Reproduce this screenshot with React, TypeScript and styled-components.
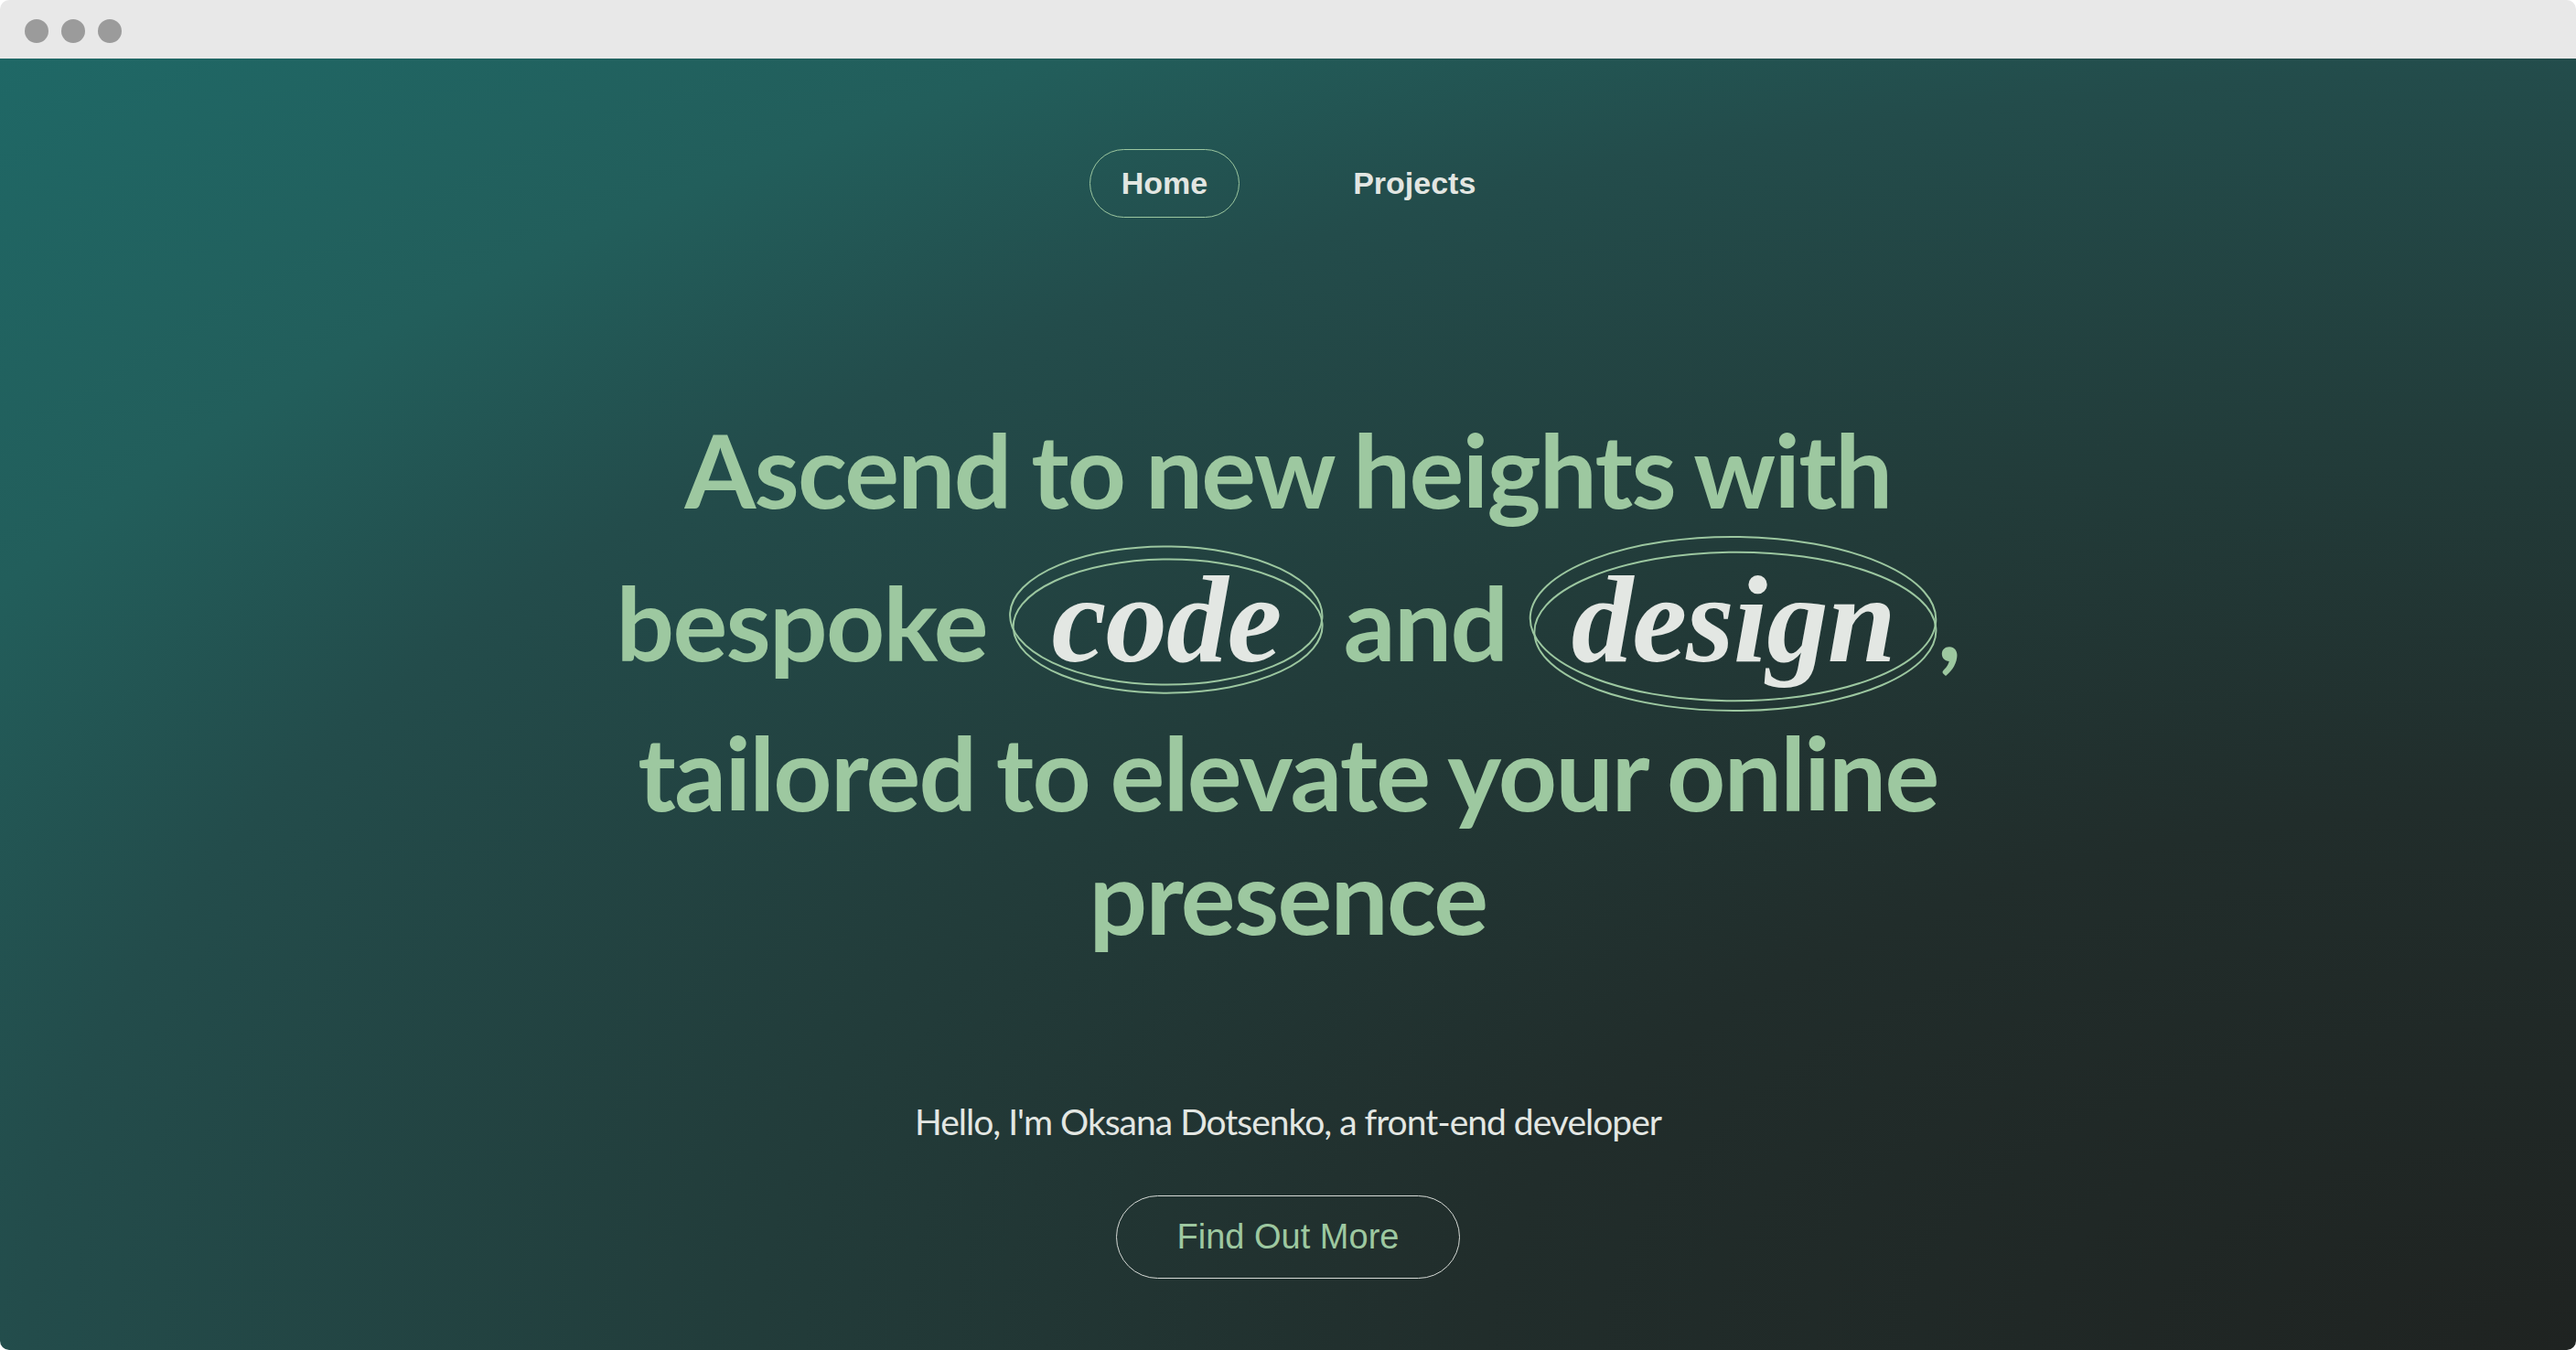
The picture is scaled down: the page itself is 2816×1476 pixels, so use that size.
import React from "react";
import styled, { createGlobalStyle } from "styled-components";

const Global = createGlobalStyle`
  html, body { margin: 0; padding: 0; background: #ffffff; }
  #root { width: 2816px; height: 1476px; }
`;

const Window = styled.div`
  width: 2816px;
  height: 1476px;
  border-radius: 10px;
  overflow: hidden;
  display: flex;
  flex-direction: column;
`;

const TitleBar = styled.div`
  height: 64px;
  flex: none;
  box-sizing: border-box;
  background: #e8e8e8;
  display: flex;
  align-items: center;
  gap: 14px;
  padding: 4px 0 0 27px;
`;

const Dot = styled.span`
  width: 26px;
  height: 26px;
  border-radius: 50%;
  background: #9b9b9b;
`;

const Hero = styled.main`
  flex: 1;
  display: flex;
  flex-direction: column;
  align-items: center;
  padding-top: 99px;
  background: radial-gradient(
    ellipse farthest-corner at 100% 100%,
    #1f2321 0%,
    #212d2b 30%,
    #223c3a 50%,
    #234c4b 70%,
    #225e5b 82%,
    #1f6866 100%
  );
`;

const Nav = styled.nav`
  display: flex;
  gap: 89px;
  padding-left: 23px;
`;

const NavLink = styled.a<{ $active?: boolean }>`
  font-family: "Liberation Sans", Arial, sans-serif;
  font-weight: 700;
  font-size: 34px;
  line-height: 39px;
  padding: 17px 34px;
  border-radius: 999px;
  border: 1.5px solid ${(p) => (p.$active ? "#9cc7a0" : "transparent")};
  color: #e2e6e2;
  text-decoration: none;
`;

const Headline = styled.h1`
  margin: 207px 0 0;
  font-family: Lato, "Open Sans", sans-serif;
  font-weight: 700;
  font-size: 112px;
  line-height: 135px;
  letter-spacing: -1.7px;
  word-spacing: -3px;
  text-align: center;
  color: #9dc8a0;
`;

const Em = styled.span`
  position: relative;
  display: inline-block;
  padding: 17px 46px 17px 48px;
  font-family: "Liberation Serif", "Times New Roman", serif;
  font-style: italic;
  font-weight: 700;
  font-size: 135px;
  line-height: 1.2;
  letter-spacing: -1px;
  word-spacing: 0;
  color: #e3e7e3;
`;

const Rings = styled.svg<{ $tall?: boolean }>`
  position: absolute;
  left: 0;
  top: ${(p) => (p.$tall ? "4px" : "15px")};
  width: 100%;
  height: ${(p) => (p.$tall ? "calc(100% + 1px)" : "calc(100% - 30px)")};
  overflow: visible;
  pointer-events: none;
`;

const Intro = styled.p`
  margin: 156px 0 0;
  font-family: Lato, "Open Sans", sans-serif;
  font-size: 39px;
  line-height: 48px;
  letter-spacing: -1px;
  color: #e3e7e3;
`;

const CTA = styled.button`
  margin-top: 57px;
  height: 91px;
  padding: 0 66px;
  box-sizing: border-box;
  border-radius: 999px;
  border: 1.5px solid #d6dad6;
  background: transparent;
  font-family: "Liberation Sans", Arial, sans-serif;
  font-size: 38px;
  color: #9dc8a0;
  cursor: pointer;
`;

function Circled({ children, tall }: { children: React.ReactNode; tall?: boolean }) {
  return (
    <Em>
      {children}
      <Rings viewBox="0 0 100 100" preserveAspectRatio="none" $tall={tall} aria-hidden>
        <ellipse
          cx="50"
          cy="47"
          rx="49.5"
          ry="45.5"
          fill="none"
          stroke="#9cc7a0"
          strokeWidth="2"
          vectorEffect="non-scaling-stroke"
          transform="rotate(2 50 50)"
        />
        <ellipse
          cx="50.5"
          cy="54"
          rx="49"
          ry="44"
          fill="none"
          stroke="#9cc7a0"
          strokeWidth="2"
          vectorEffect="non-scaling-stroke"
          transform="rotate(-2 50 50)"
        />
      </Rings>
    </Em>
  );
}

export default function App() {
  return (
    <>
      <Global />
      <Window>
        <TitleBar>
          <Dot />
          <Dot />
          <Dot />
        </TitleBar>
        <Hero>
          <Nav>
            <NavLink href="#" $active>
              Home
            </NavLink>
            <NavLink href="#">Projects</NavLink>
          </Nav>
          <Headline>
            Ascend to new heights with
            <br />
            bespoke <Circled>code</Circled> and <Circled tall>design</Circled>,
            <br />
            tailored to elevate your online
            <br />
            presence
          </Headline>
          <Intro>Hello, I'm Oksana Dotsenko, a front-end developer</Intro>
          <CTA>Find Out More</CTA>
        </Hero>
      </Window>
    </>
  );
}
